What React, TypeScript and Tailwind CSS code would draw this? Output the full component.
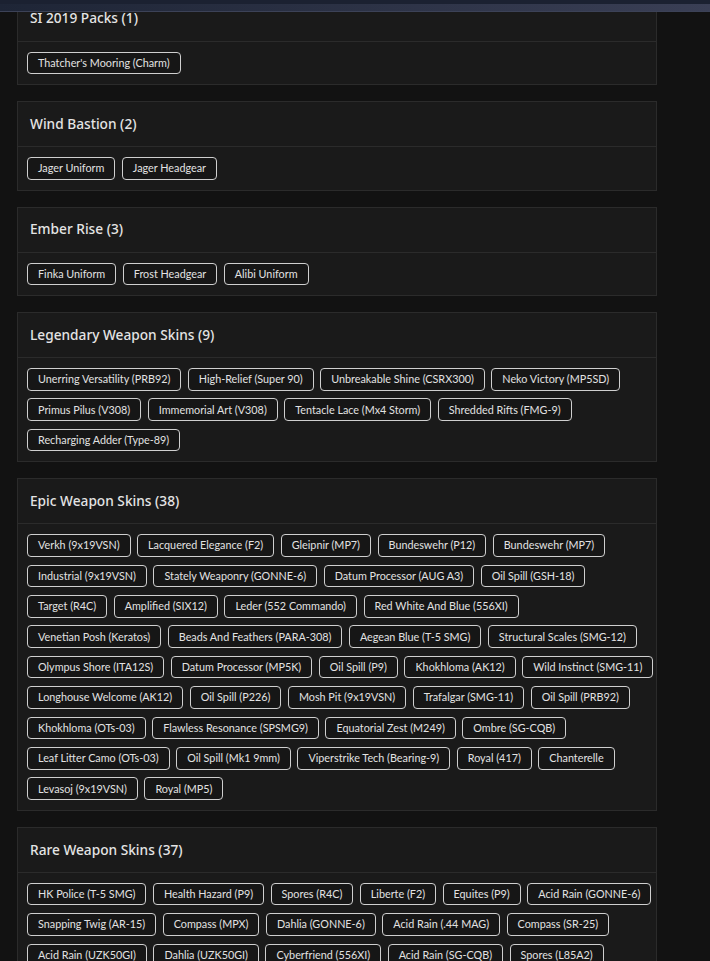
type Section = { title: string; count: number; rows: string[][] };

const sections: Section[] = [
  { title: "SI 2019 Packs", count: 1, rows: [["Thatcher's Mooring (Charm)"]] },
  { title: "Wind Bastion", count: 2, rows: [["Jager Uniform", "Jager Headgear"]] },
  { title: "Ember Rise", count: 3, rows: [["Finka Uniform", "Frost Headgear", "Alibi Uniform"]] },
  {
    title: "Legendary Weapon Skins",
    count: 9,
    rows: [
      ["Unerring Versatility (PRB92)", "High-Relief (Super 90)", "Unbreakable Shine (CSRX300)", "Neko Victory (MP5SD)"],
      ["Primus Pilus (V308)", "Immemorial Art (V308)", "Tentacle Lace (Mx4 Storm)", "Shredded Rifts (FMG-9)"],
      ["Recharging Adder (Type-89)"],
    ],
  },
  {
    title: "Epic Weapon Skins",
    count: 38,
    rows: [
      ["Verkh (9x19VSN)", "Lacquered Elegance (F2)", "Gleipnir (MP7)", "Bundeswehr (P12)", "Bundeswehr (MP7)"],
      ["Industrial (9x19VSN)", "Stately Weaponry (GONNE-6)", "Datum Processor (AUG A3)", "Oil Spill (GSH-18)"],
      ["Target (R4C)", "Amplified (SIX12)", "Leder (552 Commando)", "Red White And Blue (556XI)"],
      ["Venetian Posh (Keratos)", "Beads And Feathers (PARA-308)", "Aegean Blue (T-5 SMG)", "Structural Scales (SMG-12)"],
      ["Olympus Shore (ITA12S)", "Datum Processor (MP5K)", "Oil Spill (P9)", "Khokhloma (AK12)", "Wild Instinct (SMG-11)"],
      ["Longhouse Welcome (AK12)", "Oil Spill (P226)", "Mosh Pit (9x19VSN)", "Trafalgar (SMG-11)", "Oil Spill (PRB92)"],
      ["Khokhloma (OTs-03)", "Flawless Resonance (SPSMG9)", "Equatorial Zest (M249)", "Ombre (SG-CQB)"],
      ["Leaf Litter Camo (OTs-03)", "Oil Spill (Mk1 9mm)", "Viperstrike Tech (Bearing-9)", "Royal (417)", "Chanterelle"],
      ["Levasoj (9x19VSN)", "Royal (MP5)"],
    ],
  },
  {
    title: "Rare Weapon Skins",
    count: 37,
    rows: [
      ["HK Police (T-5 SMG)", "Health Hazard (P9)", "Spores (R4C)", "Liberte (F2)", "Equites (P9)", "Acid Rain (GONNE-6)"],
      ["Snapping Twig (AR-15)", "Compass (MPX)", "Dahlia (GONNE-6)", "Acid Rain (.44 MAG)", "Compass (SR-25)"],
      ["Acid Rain (UZK50GI)", "Dahlia (UZK50GI)", "Cyberfriend (556XI)", "Acid Rain (SG-CQB)", "Spores (L85A2)"],
    ],
  },
];

function SectionCard({ section }: { section: Section }) {
  return (
    <div className="bg-[#1a1a1a] border border-[#2b2b2b]">
      <div className="h-[45px] flex items-center px-[12px] border-b border-[#2b2b2b]">
        <h2 className="text-[13.7px] font-medium text-[#e4e4e4]">
          {section.title} ({section.count})
        </h2>
      </div>
      <div className="flex flex-col gap-[7.9px] px-[9px] pt-[10px] pb-[10px]">
        {section.rows.map((row, r) => (
          <div key={r} className="flex gap-[6.5px]">
            {row.map((item) => (
              <span
                key={item}
                className="h-[22.5px] flex items-center px-[10px] rounded-[4px] border border-[#cfcfcf] bg-[#161616] text-[10.8px] text-[#e2e2e2] whitespace-nowrap font-['Lato',sans-serif]"
              >
                {item}
              </span>
            ))}
          </div>
        ))}
      </div>
    </div>
  );
}

export default function App() {
  return (
    <div className="relative min-h-screen bg-[#121212] overflow-hidden font-['Noto_Sans',sans-serif]">
      {/* Top bar */}
      <div className="absolute top-0 left-0 right-0 z-10">
        <div className="h-[4px] bg-[#1b2131]" />
        <div className="h-[7px] bg-gradient-to-r from-[#1e2536] to-[#3a3f55]" />
        <div className="h-px bg-[#3c4257]" />
      </div>

      <div className="w-[640px] ml-[17px] mt-[-4.5px] flex flex-col gap-[16px] pb-10">
        {sections.map((s) => (
          <SectionCard key={s.title} section={s} />
        ))}
      </div>
    </div>
  );
}
